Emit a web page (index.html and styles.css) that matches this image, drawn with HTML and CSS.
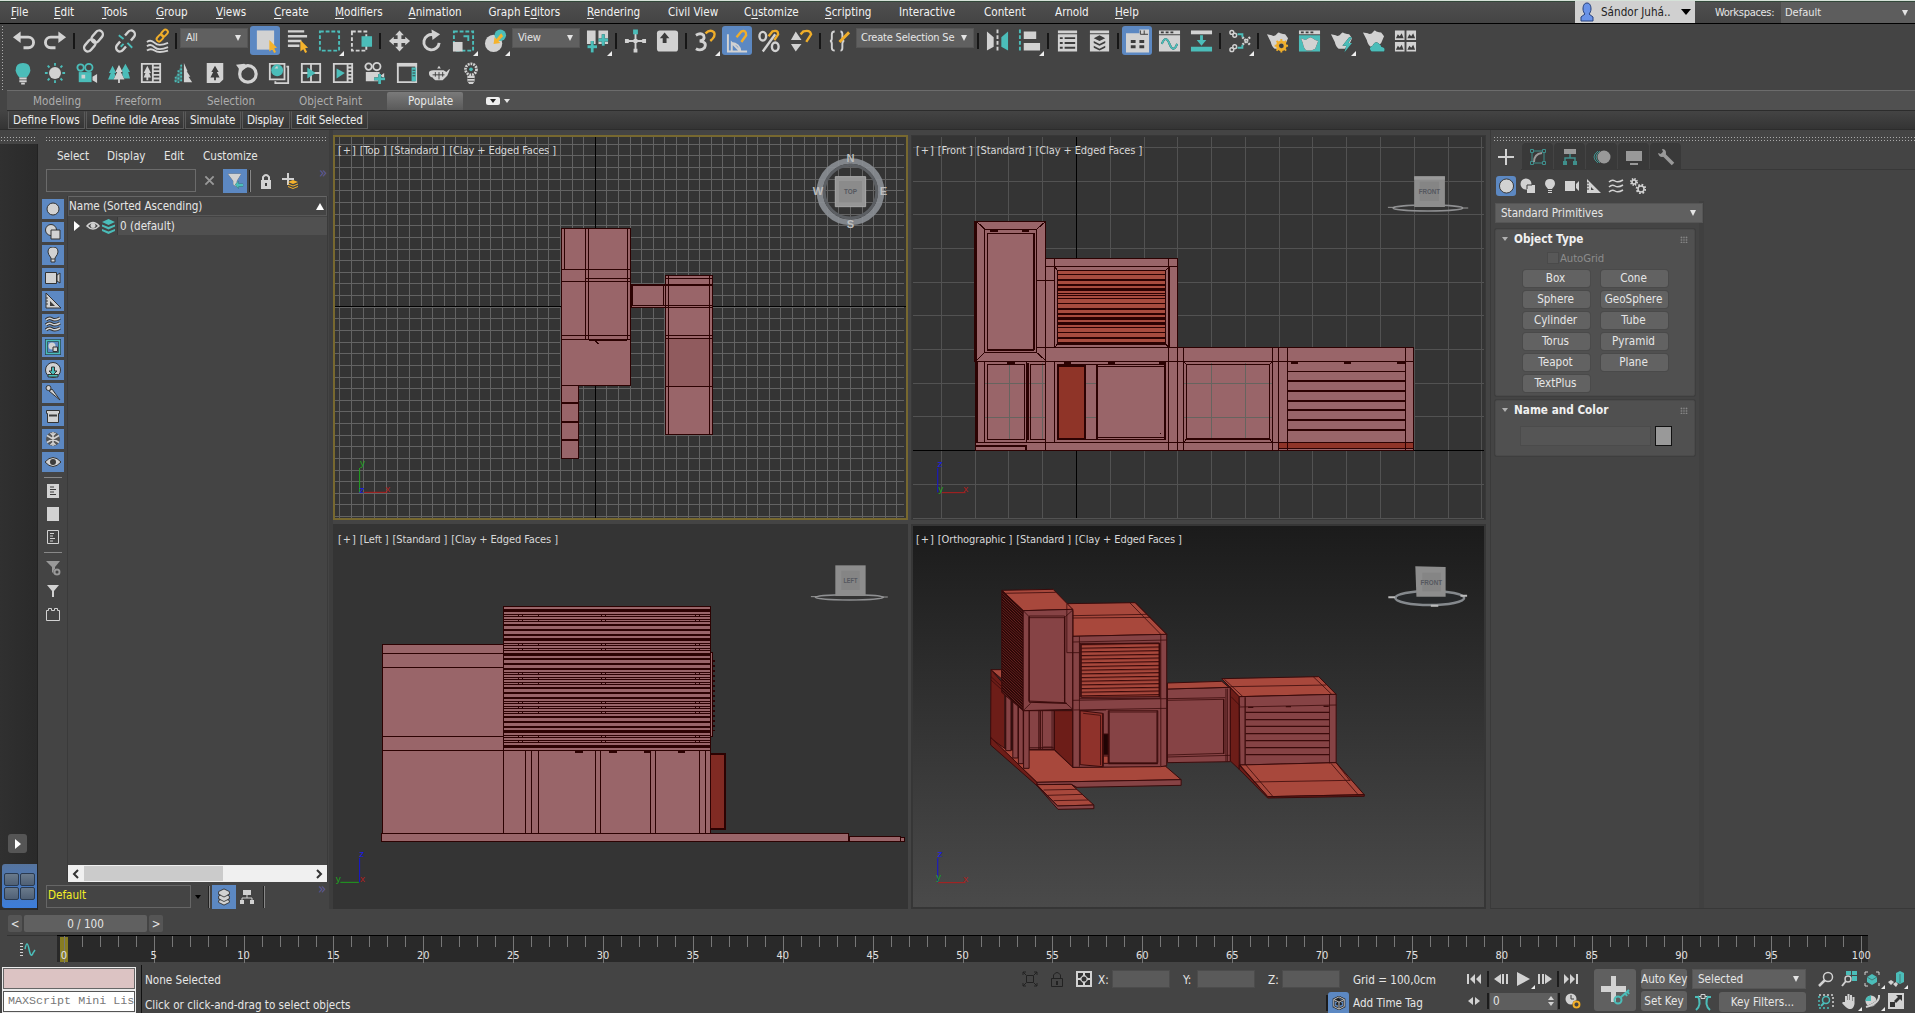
FILE: index.html
```html
<!DOCTYPE html>
<html lang="en">
<head>
<meta charset="utf-8">
<title>3ds Max</title>
<link rel="stylesheet" href="styles.css">
</head>
<body>
<nav class="menubar">
  <div class="menus">
    <span><u>F</u>ile</span><span><u>E</u>dit</span><span><u>T</u>ools</span><span><u>G</u>roup</span><span><u>V</u>iews</span><span><u>C</u>reate</span><span><u>M</u>odifiers</span><span><u>A</u>nimation</span><span>Graph E<u>d</u>itors</span><span><u>R</u>endering</span><span>Civil View</span><span>C<u>u</u>stomize</span><span><u>S</u>cripting</span><span>Interactive</span><span>Content</span><span>Arnold</span><span><u>H</u>elp</span>
  </div>
  <div class="user">
    <svg width="14" height="20" viewBox="0 0 14 20"><path d="M7 1c3 0 4 3 4 6 0 2-1 4-2 5l4 3v4H1v-4l4-3c-1-1-2-3-2-5 0-3 1-6 4-6z" fill="#6a93e8" stroke="#26407c"/></svg>
    <span>Sándor Juhá..</span><i class="down dark"></i>
  </div>
  <span class="wslabel">Workspaces:</span>
  <div class="workspace"><span>Default</span><i class="down small"></i></div>
</nav>

<div class="toolbar main-tools">
  <div class="tool"><svg viewBox="0 0 24 24"><path class="ls w3" d="M6 8h11a5 5 0 0 1 0 11h-5"/><path class="l" d="M1 8l8-6v12z"/></svg></div>
  <div class="tool"><svg viewBox="0 0 24 24"><path class="ls w3" d="M18 8H7a5 5 0 0 0 0 11h5"/><path class="l" d="M23 8l-8-6v12z"/></svg></div>
  <i class="sep"></i>
  <div class="tool"><svg viewBox="0 0 24 24"><g class="ls w25" transform="rotate(-50 12 12)"><rect x="-1" y="8" width="14" height="8" rx="4"/><rect x="11" y="8" width="14" height="8" rx="4"/></g></svg></div>
  <div class="tool"><svg viewBox="0 0 24 24"><g class="ls w25" transform="rotate(-50 12 12)"><path d="M8 8H3a4 4 0 0 0 0 8h5M16 8h5a4 4 0 0 1 0 8h-5"/></g><path class="ts w2" d="M5 6l5 4M14 14l5 5M7 18l3-3"/></svg></div>
  <div class="tool"><svg viewBox="0 0 24 24"><path class="ls w2" d="M1 13q4-3 8 1t14 0M1 17.500q4-3 8 1t14 0M1 22q4-3 8 0t14 0"/><g class="gs w2" transform="rotate(-48 17 7)"><rect x="10" y="4" width="8" height="5" rx="2.500"/><rect x="17" y="4" width="8" height="5" rx="2.500"/></g></svg></div>
  <i class="sep"></i>
  <div class="combo c-all"><span>All</span><i class="down small"></i></div>
  <div class="tool on"><svg viewBox="0 0 24 24"><path class="l" d="M3 1h18v20H3z"/><path class="g" d="M16 11v12l3-2.500 2 4 2-1-2-4 3-.5z"/></svg></div>
  <div class="tool"><svg viewBox="0 0 24 24"><path class="ls w25" d="M2 2h17M2 7h20M2 12h14M2 17h12"/><path class="g" d="M15 11v12l3-2.500 2 4 2-1-2-4 3-.5z"/></svg></div>
  <div class="tool fly"><svg viewBox="0 0 24 24"><path class="ts w2 dash" d="M2 2h20v20H2z"/></svg></div>
  <div class="tool"><svg viewBox="0 0 24 24"><path class="ls w2 dash" d="M2 2h15v20H2z"/><path class="t" d="M12 7h11v11H12z"/></svg></div>
  <i class="sep"></i>
  <div class="tool"><svg viewBox="0 0 24 24"><path class="l" d="M12 1l4.500 5H14v4h4V7.500l5 4.500-5 4.500V14h-4v4h2.500L12 23l-4.500-5H10v-4H6v2.500L1 12l5-4.500V10h4V6H7.500z"/></svg></div>
  <div class="tool"><svg viewBox="0 0 24 24"><path class="ls w3" d="M14 5.500A8 8 0 1 0 20 14"/><path class="l" d="M12 0l9 5-8 6z"/></svg></div>
  <div class="tool fly"><svg viewBox="0 0 24 24"><path class="ts w2 dash" d="M2 2h20v20H2z"/><path class="l" d="M1 13h10v10H1z"/><path class="ts w2" d="M12 7h5v5"/></svg></div>
  <div class="tool fly"><svg viewBox="0 0 24 24"><circle class="l" cx="10" cy="14.500" r="9"/><circle class="t" cx="17" cy="6" r="6"/><path class="g" d="M18 4l2 3-5 5 2 2-7 1 1-7 2 2z"/></svg></div>
  <div class="combo c-view"><span>View</span><i class="down small"></i></div>
  <div class="tool fly"><svg viewBox="0 0 24 24"><path class="l" d="M1 1h9v14H1zM13 1h10v14H13z"/><path class="ts w3 halo" d="M6.500 12v12M1.500 18h10M18 5v12M13 11h10"/></svg></div>
  <i class="sep"></i>
  <div class="tool"><svg viewBox="0 0 24 24"><path class="ls w2" d="M12 4v18M2 12h20"/><path class="l" d="M1 10h4v4H1zM19 10h4v4h-4zM10 20h4v4h-4zM10 10h4v4h-4z"/><path class="t" d="M9.500 0h5v5h-5z"/></svg></div>
  <div class="tool"><svg viewBox="0 0 24 24"><rect class="l" x="1" y="1" width="22" height="22" rx="3"/><path class="k" d="M9 3l5 6h-3v5H7V9H4z"/></svg></div>
  <i class="sep"></i>
  <div class="tool fly"><svg viewBox="0 0 24 24"><path class="ls w3" d="M2 6q5-3 8 0 2 5-4 6 8 1 5 7-4 4-9 1"/><path class="gs w25" d="M12 4q5-5 9-1 2 4-4 9"/></svg></div>
  <div class="tool on"><svg viewBox="0 0 24 24"><path class="ls w2" d="M2 5v18h20M6 23v-9l9 9M6 14a9 9 0 0 1 9 9"/><path class="gs w25" d="M11 8l5-6q5-2 5 4l-5 7"/></svg></div>
  <div class="tool"><svg viewBox="0 0 24 24"><g class="ls w25"><ellipse cx="5" cy="7" rx="3.500" ry="4.500"/><ellipse cx="18" cy="18" rx="3.500" ry="4.500"/><path d="M18 5L5 23"/></g><path class="gs w25" d="M11 7l4-5q6-2 6 3l-4 6"/></svg></div>
  <div class="tool"><svg viewBox="0 0 24 24"><path class="l" d="M6 2l6 9H1zM1 15h11l-6 8z"/><path class="gs w25" d="M11 5l3-3q7-2 8 3l-5 8"/></svg></div>
  <i class="sep"></i>
  <div class="tool"><svg viewBox="0 0 24 24"><path class="ls w2" d="M7 2Q4 2 4 5v4q0 3-2 3 2 0 2 3v4q0 3 3 3M13 2q2 0 2 3v4q0 3 2 3-2 0-2 3v4q0 3-2 3"/><path class="gs w3" d="M22 3L12 13"/></svg></div>
  <div class="combo c-sets"><span>Create Selection Se</span><i class="down small"></i></div>
  <i class="sep"></i>
  <div class="tool"><svg viewBox="0 0 24 24"><path class="l" d="M1 2l7 6v10l-7 4z"/><path class="t" d="M23 2l-7 6v10l7 4z"/><path class="ls w2 dash" d="M12 0v24"/></svg></div>
  <div class="tool fly"><svg viewBox="0 0 24 24"><path class="ts w2 dash" d="M2 0v24"/><path class="l" d="M6 2h13v8H6zM6 14h17v8H6z"/></svg></div>
  <i class="sep"></i>
  <div class="tool"><svg viewBox="0 0 24 24"><path class="l" d="M2 1h20v3H2zM2 5h20v18H2z"/><path class="ks w2" d="M4 9h3M9 9h11M4 14h3M9 14h11M4 19h3M9 19h11"/></svg></div>
  <div class="tool"><svg viewBox="0 0 24 24"><path class="l" d="M2 1h20v3H2zM2 5h20v18H2z"/><path class="k" d="M12 6l6 3-6 3-6-3zM6 12l6 3 6-3v2l-6 3-6-3zM6 17l6 3 6-3v2l-6 3-6-3z"/></svg></div>
  <i class="sep"></i>
  <div class="tool on"><svg viewBox="0 0 24 24"><path class="l" d="M0 4h14V0h10v24H0z"/><path class="ks w3" d="M5 12.500h5M14 12.500h5M5 18h5M14 18h5"/><path class="ks" d="M15 1v4h8M19 1v4"/></svg></div>
  <div class="tool"><svg viewBox="0 0 24 24"><path class="l" d="M1 1h22v4H1zM1 6h22v17H1z"/><path class="ks w2" d="M3 3h3M8 3h3M13 3h3"/><path class="ts w2 halo" d="M4 15q4-10 8 0t8 0"/></svg></div>
  <div class="tool"><svg viewBox="0 0 24 24"><path class="l" d="M1 1h22v4H1z"/><path class="t" d="M1 18h22v5H1zM10.500 6h3v5H17l-5 6-5-6h3.500z"/></svg></div>
  <i class="sep"></i>
  <div class="tool fly"><svg viewBox="0 0 24 24"><g class="ls w15"><circle cx="4" cy="3" r="2"/><circle cx="7" cy="6" r="2"/><circle cx="4" cy="21" r="2"/><circle cx="7" cy="18" r="2"/></g><path d="M15 8l8 8M23 8l-8 8" fill="none" stroke="#d2d2d2" stroke-width="2.500" stroke-dasharray="2 1"/><path class="ts w2" d="M10 5h5v3M10 19h5v-3"/></svg></div>
  <i class="sep"></i>
  <div class="tool"><svg viewBox="0 0 24 24"><path class="l" d="M1 5l5 1q3 2 6-2 1-2 3 0 3 1 5 1l3 4-3 7-4 4H9q-3-2-4-7z"/><path class="gs w2" d="M16 10v3M16 21v3M9 17h3M20 17h3M11 12l2 2M19 20l2 2M21 12l-2 2M11 22l2-2"/><circle class="gs w3" cx="16" cy="17" r="4"/><circle class="k" cx="16" cy="17" r="2.500"/></svg></div>
  <div class="tool"><svg viewBox="0 0 24 24"><path class="l" d="M1 1h22v4H1z"/><path class="ks w2" d="M3 3h3M8 3h3M13 3h3"/><path class="t" d="M1 6h22v17H1z"/><path class="l halo" d="M3 9l5 2q2-2 5-3 3 1 5 3l3 1-3 8-4 2h-5q-3-2-4-8z"/></svg></div>
  <div class="tool fly"><svg viewBox="0 0 24 24"><path class="l" d="M1 5l5 1q3 2 6-2 1-2 3 0 3 1 5 1l3 4-3 7-4 4H9q-3-2-4-7z"/><path class="t halo" d="M20 8l-7 9h4l-2 7 8-10h-4l4-6z"/></svg></div>
  <div class="tool"><svg viewBox="0 0 24 24"><path class="l" d="M1 3l5 1q3 2 6-2 1-2 3 0 3 1 5 1l3 4-3 7-4 4H9q-3-2-4-7z"/><path class="t halo" d="M10 23q-4-4 1-6 3-6 7-2 2 1 2 3 5 1 3 5z"/></svg></div>
  <div class="tool"><svg viewBox="0 0 24 24"><path class="l" d="M1 1h10v10H1zM13 1h10v10H13zM1 13h10v10H1zM13 13h10v10H13z"/><path class="k" d="M2 9l2-4 2 2 2-3 2 5zM14 9l2-4 2 2 2-3 2 5zM2 21l2-4 2 2 2-3 2 5zM14 21l2-4 2 2 2-3 2 5z"/></svg></div>
</div>

<div class="toolbar scene-tools">
  <div class="tool"><svg viewBox="0 0 24 24"><path class="t" d="M12 1q8 0 8 8 0 3-4 8H8Q4 12 4 9q0-8 8-8z"/><path class="ls w2" d="M8 18h8M8 21h8M10 23.500h4"/></svg></div>
  <div class="tool"><svg viewBox="0 0 24 24"><circle class="l" cx="12" cy="12" r="6.500"/><path class="ts w2" d="M12 1v3M12 20v3M1 12h3M20 12h3M4 4l2 2M18 18l2 2M20 4l-2 2M4 20l2-2"/></svg></div>
  <div class="tool"><svg viewBox="0 0 24 24"><g class="ts w2"><circle cx="5" cy="6" r="3.500"/><circle cx="14" cy="6" r="4"/></g><path class="t" d="M3 11h14v11H3z"/><path class="l" d="M18 16l5-3v10l-5-3zM6 14h4v4H6z"/></svg></div>
  <div class="tool"><svg viewBox="0 0 24 24"><path class="t" d="M5 4l4 8H7l3 7H0l3-7H1zM19 2l5 9h-2l2 7h-9l1-7h-2z"/><path class="l halo" d="M12 3l4 8h-2l4 8h-5v4h-2v-4H6l4-8H8z"/></svg></div>
  <div class="tool"><svg viewBox="0 0 24 24"><path class="ls w2" d="M2 2h20v20H2zM15 6h6M15 10h6M15 14h6M15 18h6M14 2v20"/><path class="l" d="M8 4l4 8h-2l2 5H9v3H7v-3H4l2-5H4z"/></svg></div>
  <div class="tool"><svg viewBox="0 0 24 24"><path class="t" d="M11 1v20H2z" opacity=".4"/><path class="ts w2" stroke-dasharray="2 2" d="M10 3v20M7 9v14M4 16v6"/><path class="l" d="M13 1l4 9h-1l4 6h-2l4 6h-9z"/></svg></div>
  <div class="tool"><svg viewBox="0 0 24 24"><path class="l" d="M3 1h18v18l-4 4H3z"/><path class="k" d="M12 4l4 7h-2l3 6h-4v3h-2v-3H7l3-6H8z"/></svg></div>
  <div class="tool"><svg viewBox="0 0 24 24"><circle class="ls" stroke-width="3.500" cx="13" cy="13" r="9" style="stroke-width:3.500"/><path class="l" d="M0 3l9-1 4 3-7 5-3 2V7z"/></svg></div>
  <div class="tool"><svg viewBox="0 0 24 24"><path class="ls w2" d="M20 5h2v18H8v-2M18 2v17H2V2z"/><circle class="t" cx="10" cy="9" r="6.500"/><path class="l" d="M7 7l3-3 1 3z"/></svg></div>
  <div class="tool"><svg viewBox="0 0 24 24"><path class="ls w2" d="M2 2h20v20H2zM12 2v20M2 12h20"/><path class="t" d="M8 6l9 6-9 6z"/></svg></div>
  <div class="tool"><svg viewBox="0 0 24 24"><path class="ls w2" d="M2 2h20v20H2zM17 2v20M18 6h4M18 10h4M18 14h4M18 18h4"/><path class="t" d="M5 7l9 5-9 6z"/></svg></div>
  <div class="tool"><svg viewBox="0 0 24 24"><g class="ls w2"><circle cx="5" cy="5" r="3.500"/><circle cx="14" cy="5" r="4"/></g><path class="l" d="M2 11h15v10H2zM18 15l4-3v6z"/><path class="ts w3 halo" d="M17 13v11M11 18.500h12"/></svg></div>
  <div class="tool"><svg viewBox="0 0 24 24"><path class="ls w2" d="M2 2h20v20H2z"/><path class="l" d="M1 1h22v4H1z"/><path class="t" d="M17 6h5v15h-5z"/><path class="ks" d="M18 9h3M18 12h3M18 15h3"/></svg></div>
  <div class="tool"><svg viewBox="0 0 24 24"><path class="l" d="M6 9h11l3 2 3-3h1l-3 7-5 5H8q-2-1-3-3-4-1-4-5 0-3 5-3zM10 7l2-3 2 3z"/><path class="ks" d="M8 11v5M12 11v8M16 11v5M5 14h13"/></svg></div>
  <div class="tool"><svg viewBox="0 0 24 24"><circle class="ls w3" stroke-dasharray="2 1" cx="12" cy="8" r="6"/><circle class="t" cx="12" cy="8" r="2"/><path class="l" d="M8 15h8v6l-2 3h-4l-2-3z"/><path class="ks" d="M8 18h8M8 21h8"/></svg></div>
</div>

<div class="ribbon-tabs"><span>Modeling</span><span>Freeform</span><span>Selection</span><span>Object Paint</span><span class="active">Populate</span><b class="pill"><i class="down tiny dark"></i></b><i class="down tiny"></i></div>
<div class="ribbon-panel"><span>Define Flows</span><span>Define Idle Areas</span><span>Simulate</span><span>Display</span><span>Edit Selected</span></div>

<main class="workspace-area">
  <aside class="dockcol">
    <div class="dots"></div>
    <div class="dock">
      <button class="dockplay"><i class="right"></i></button>
      <div class="layout-tile"><i></i><i></i><i></i><i></i></div>
    </div>
  </aside>

  <section class="explorer">
    <div class="dots"></div>
    <div class="ex-menu"><span>Select</span><span>Display</span><span>Edit</span><span>Customize</span></div>
    <div class="ex-search">
      <div class="box"></div>
      <svg class="x" viewBox="0 0 12 12"><path d="M1.500 1.500l9 9M10.500 1.500l-9 9" stroke="#999" stroke-width="2"/></svg>
      <div class="blue"><svg viewBox="0 0 20 20"><path class="l halo" d="M2 2h15l-5 8v7l-4-3v-4z"/><path class="t halo" d="M10 14l4-4v3h5v3h-5v3z"/></svg></div>
      <i class="vsep"></i>
      <svg class="i16 lock" viewBox="0 0 16 16"><path class="ls w2" d="M5 8V4q3-4 6 0v4"/><path class="l" d="M3 7h10v9H3z"/><path class="ks w2" d="M8 10v3"/></svg>
      <svg class="i16" viewBox="0 0 16 16"><path class="ls w2" d="M6 0v12M0 6h12"/><path class="g" d="M11 7l5 2-5 2-5-2zM6 10.500l5 2 5-2v1l-5 2-5-2zM6 13l5 2 5-2v1l-5 2-5-2z"/></svg>
      <span class="more">»</span>
    </div>
    <div class="ex-body">
      <div class="filters">
        <div class="f"><svg viewBox="0 0 16 16"><circle class="l o" cx="8" cy="8" r="6"/></svg></div>
        <div class="f"><svg viewBox="0 0 16 16"><circle class="l o" cx="6" cy="6" r="5.500"/><path class="l o" d="M6 6h9v9H6z"/></svg></div>
        <div class="f"><svg viewBox="0 0 16 16"><path class="l o" d="M8 0q5 0 5 5 0 2-3 6v4H6v-4Q3 7 3 5q0-5 5-5z"/><path class="ks" d="M6 12h4"/></svg></div>
        <div class="f"><svg viewBox="0 0 16 16"><path class="l o" d="M.5 2.500h11v11H.5zM12 5l3-2v10l-3-2z"/></svg></div>
        <div class="f"><svg viewBox="0 0 16 16"><path class="l o" d="M1 0l15 15H1z"/><path class="k" d="M5 8l5 5H5z"/><path class="ks" d="M1 5h2M1 8h2M1 11h2"/></svg></div>
        <div class="f"><svg viewBox="0 0 16 16"><path d="M1 4q3-3 6-1t8-1M1 9q3-3 6-1t8-1M1 14q3-3 6-1t8-1" fill="none" stroke="#333" stroke-width="3.500"/><path class="ls w15" d="M1 4q3-3 6-1t8-1M1 9q3-3 6-1t8-1M1 14q3-3 6-1t8-1"/></svg></div>
        <div class="f"><svg viewBox="0 0 16 16"><path fill="#2c4350" d="M0 0h16v16H0z"/><path class="ts w15" d="M1.500 1.500h13v13h-13z"/><path fill="#5c88c2" d="M3 3h10v10H3z"/><circle class="l" cx="7" cy="7" r="3.500"/><path class="l o" d="M8 8h4.500v4.500H8z"/></svg></div>
        <div class="f"><svg viewBox="0 0 16 16"><circle class="l o" cx="8" cy="8" r="7.500"/><path class="t o" d="M6.500 5h3v4H12l-4 4-4-4h2.500zM3 12.500h10V15H3z"/></svg></div>
        <div class="f"><svg viewBox="0 0 16 16"><path class="l o" d="M4 6l3-2 8 11z"/><circle class="l o" cx="3.500" cy="3" r="2.500"/></svg></div>
        <div class="f"><svg viewBox="0 0 16 16"><path class="l o" d="M1.500 2.500h13v3h-1v9h-11v-9h-1z"/><path class="ks w2" d="M4 7.500h8"/></svg></div>
        <div class="f"><svg viewBox="0 0 16 16"><circle cx="8" cy="8" r="7" fill="#555"/><path class="ls w15" d="M8 1v14M2 4.500l12 7M14 4.500L2 11.500M5.500 2l2.500 2.500L10.500 2M5.500 14L8 11.500l2.500 2.500"/></svg></div>
        <div class="f"><svg viewBox="0 0 16 16"><path class="l o" d="M0 8q8-9 16 0-8 9-16 0z"/><circle class="k" cx="8" cy="8" r="3"/></svg></div>
        <hr>
        <div class="p"><svg viewBox="0 0 16 16"><path class="l" d="M2 1h12v14H2z"/><path class="ks" d="M5 4h4M5 6.500h6M5 9h4M5 11.500h6"/></svg></div>
        <div class="p"><svg viewBox="0 0 16 16"><path class="l" d="M2 1h12v14H2z"/></svg></div>
        <div class="p"><svg viewBox="0 0 16 16"><path class="ls" d="M2.500 1.500h11v13h-11zM5 4.500h4M5 7h3M5 9.500h5M5 12h3"/></svg></div>
        <hr class="second">
        <div class="p"><svg viewBox="0 0 16 16" opacity=".6"><path class="l" d="M1 1h14l-5 6v8l-3-3V7z"/><circle class="ls w2 halo" cx="12" cy="12" r="2.500"/></svg></div>
        <div class="p"><svg viewBox="0 0 16 16"><path class="l" d="M2 2h12L9 8v6H7V8z"/></svg></div>
        <div class="p"><svg viewBox="0 0 16 16"><path class="ls" d="M1.500 4.500h2v-2h3v2h3v-2h3v2h2v10h-13z"/></svg></div>
      </div>
      <div class="tree">
        <div class="th"><span>Name (Sorted Ascending)</span><i class="up"></i></div>
        <div class="tr"><i class="right"></i>
          <svg width="14" height="10" viewBox="0 0 14 10"><path class="ls w15" d="M1 5q6-7 12 0-6 6-12 0z"/><circle class="l" cx="7" cy="4.500" r="2.500"/></svg>
          <svg width="13" height="15" viewBox="0 0 13 15"><path class="t" d="M6.500 0L13 3 6.500 6 0 3zM0 5.500l6.500 2.500L13 5.500V7.500L6.500 10.500 0 7.500zM0 10l6.500 2.500L13 10v2l-6.500 3L0 12z"/></svg>
          <span>0 (default)</span></div>
        <div class="hscroll"><svg viewBox="0 0 8 10"><path d="M6 1L2 5l4 4"/></svg><i></i><svg viewBox="0 0 8 10"><path d="M2 1l4 4-4 4"/></svg></div>
      </div>
    </div>
    <div class="ex-foot">
      <div class="box">Default</div><i class="down tiny black"></i><i class="vsep"></i>
      <div class="blue"><svg viewBox="0 0 20 20"><path class="l o" d="M10 1l6 3v3l-2 1 2 1v3l-2 1 2 1v2l-6 3-6-3v-2l2-1-2-1V9l2-1-2-1V4z"/><path class="ks" d="M4 7l6 3 6-3M4 12l6 3 6-3"/></svg></div>
      <svg class="i16" viewBox="0 0 16 16"><path class="l" d="M4 1h8v5H4zM1 11h4v4H1zM11 11h4v4h-4z"/><path class="ls" d="M8 6v3M3 11V9h10v2"/></svg>
      <i class="vsep"></i><span class="more">»</span>
    </div>
  </section>

  <section class="viewports">
    <div class="vp active">
      <svg viewBox="8.100 15 1554.400 1155" preserveAspectRatio="none">
        <g class="grid" data-x0="27" data-dx="31.360" data-y0="43" data-dy="34.900"></g>
        <path class="axis" d="M717 15V1170M8 529H1560"/>
        <g class="pk">
          <path d="M625 295H813V767H625zM625 767H672V985H625zM814 465H907V532H814zM907 437H1034V913H907z"/>
          <path fill="#905b5e" d="M907 626H1034V769H907z"/>
        </g>
        <path class="e" d="M634 295V418M690 295V628M698 295V628M804 295V628M625 418H813M690 445H813M625 454H813M625 617H813M625 628H813M625 418V626M817 468V527M901 468V527M814 527H1034M907 446H1034M907 532H1034M915 437V913M1026 437V913M907 617H1034M907 626H1034M716 630l10 13"/>
        <path class="e2" d="M814 465H1034M700 631H803M625 820H672M625 875H672M625 929H672"/>
        <ellipse cx="1407" cy="185" rx="83" ry="92" fill="none" stroke="#8b8f95" stroke-width="17" vector-effect="none" opacity=".9"/>
        <ellipse cx="1407" cy="185" rx="71" ry="79" fill="none" stroke="#5c5f63" stroke-width="3"/>
        <path fill="#969696" stroke="#aaa" d="M1366 140h82v90h-82z"/><path fill="#8b8b8b" d="M1376 153h62v64h-62z"/>
        <g class="cubetext"><text x="1407" y="193" class="dim" textLength="35" lengthAdjust="spacingAndGlyphs">TOP</text></g>
        <g class="nsew"><text x="1407" y="97">N</text><text x="1407" y="293">S</text><text x="1319" y="195">W</text><text x="1496" y="195">E</text></g>
        <path stroke="#1fa01f" d="M80 1014V1087"/><path stroke="#b01e1e" d="M92 1087H155"/>
        <g class="axl"><text x="88" y="1008" fill="#1fa01f">y</text><text x="86" y="1088" fill="#1a1aea">z</text><text x="156" y="1086" fill="#b01e1e">x</text></g>
      </svg>
      <p class="vl"><span>[+]</span><span>[Top ]</span><span>[Standard ]</span><span>[Clay + Edged Faces ]</span></p>
    </div>
    <div class="vp front">
      <svg viewBox="2.700 15 1554.400 1155" preserveAspectRatio="none">
        <g class="grid" data-x0="85" data-dx="91.300" data-y0="52" data-dy="101.100"></g>
        <path class="axis" d="M450 20V1165M8 961H1552"/>
        <g class="pk">
          <path d="M175 274H367V385H723V653H1362V961H178V695H175z"/>
          <path fill="#a84c3f" d="M398 421H691V640H398z"/>
          <path fill="#8f3428" d="M400 708H473V925H400zM997 936H1361V955H997z"/>
        </g>
        <path class="gl" d="M269 700V930M202 760H366M202 862H366M359 700V930M475 760H503M475 862H503M815 700V925M907 700V925M742 760H980M742 862H980"/>
        <path class="e" d="M202 298H342V667H202zM209 310H336V659H209zM180 274L202 298M367 274L342 298M367 692L342 667M180 692L202 667M342 451H390M390 385V653M366 385V961M367 409H723M342 653H1362M178 695H1362M698 385V961M723 653V961M740 653V961M980 653V961M997 653V961M1020 653V961M1340 653V961M178 937H997M997 955H1362M390 409H701V653H390zM398 421H691V643H398zM390 411l8 8M701 411l-10 10M390 653l8-10M701 653l-10-10"/>
        <path class="e" d="M202 695V937M209 703H310V928H209zM316 695V937M326 703H366M326 703V928H366M390 695V937M475 704V928M503 704V928M398 704H693M398 928H693M508 708H689V922H508zM740 695V937M747 703H973V927H747zM978 697l-6 6M742 697l5 6M978 935l-6-8M742 935l5-8M1020 724H1340M677 910v2"/>
        <path class="e2" d="M178 274V695M181 695V937M398 450H691M398 465H691M398 537H691M398 551H691M398 624H691M336 310V659M209 659H336M318 700V930M400 706H473V926H400zM506 706V926M690 706V926M747 926H973M178 947H314V960M1020 752H1340M1020 782H1340M1020 812H1340M1020 841H1340M1020 870H1340M1020 900H1340"/>
        <path class="e3" d="M398 479H691M398 566H691M398 580H691"/>
        <path class="e" d="M398 433H691M398 490H691M398 497H691M398 505H691M398 520H691M398 592H691M398 607H691M398 638H691"/>
        <path class="e3" d="M217 302h20M303 302h18M262 698h22M417 697h18M535 699h18M674 698h18M1030 698h20M1173 698h20M1317 698h20"/>
        <ellipse cx="1400" cy="234" rx="94" ry="9" fill="none" stroke="#8f9092" stroke-width="1.500"/>
        <path stroke="#999" d="M1292 232h20M1490 234h19"/>
        <path fill="#8d8d8d" d="M1363 139h83v92h-83z"/><path fill="#9a9a9a" d="M1363 139h83v10h-83z"/><path fill="#858585" d="M1378 155h52v58h-52z"/>
        <g class="cubetext"><text x="1404" y="192" textLength="58" lengthAdjust="spacingAndGlyphs">FRONT</text></g>
        <path stroke="#1515d0" d="M75 1014V1087"/><path stroke="#b01e1e" d="M86 1088H150"/>
        <g class="axl"><text x="81" y="1010" fill="#1a1aea">z</text><text x="83" y="1087" fill="#1fa01f">y</text><text x="151" y="1086" fill="#b01e1e">x</text></g>
      </svg>
      <p class="vl"><span>[+]</span><span>[Front ]</span><span>[Standard ]</span><span>[Clay + Edged Faces ]</span></p>
    </div>
    <div class="vp">
      <svg viewBox="8.100 12 1554.400 1155" preserveAspectRatio="none">
        <g class="pk"><path d="M142 373H469V259H1029V940H1402V965H139V940H142zM1404 949H1543V964H1404zM1543 953h10v10h-10zM1029 398H1034V649H1029z"/><path fill="#802a23" d="M1029 701H1068V928H1029z"/></g>
        <path class="e" d="M469 259V940M142 400H469M142 442H469M142 649H469M142 691H1029M139 940H1402M528 691V940M544 691V940M563 691V940M717 691V940M731 691V940M866 691V940M880 691V940M999 691V940M1015 691V940M1029 691V940"/>
        <path class="e" d="M469 283H1029M469 290H1029M469 298H1029M469 305H1029M469 370H1029M469 377H1029M469 384H1029M469 391H1029M469 458H1029M469 464H1029M469 472H1029M469 479H1029M469 487H1029M469 493H1029M469 545H1029M469 551H1029M469 559H1029M469 566H1029M469 574H1029M469 580H1029M469 646H1029M469 653H1029M469 661H1029M469 668H1029"/>
        <path class="e2" d="M469 315H1029M469 330H1029M469 345H1029M469 417H1029M469 432H1029M469 447H1029M469 504H1029M469 519H1029M469 534H1029M469 591H1029M469 606H1029M469 621H1029"/>
        <path class="e3" d="M469 271H1029M469 358H1029M469 404H1029M469 634H1029M469 680H1029M662 694h22M754 694h22M849 694h18M941 694h20M1029 702h41M1029 927h41"/>
        <path id="studs" class="e" d="M509 283v7M520 283v7M563 283v7M734 283v7M745 283v7M988 283v7M999 283v7M509 298v7M520 298v7M563 298v7M734 298v7M745 298v7M988 298v7M999 298v7"/>
        <use href="#studs" y="87"/><use href="#studs" y="174"/><use href="#studs" y="189"/><use href="#studs" y="262"/><use href="#studs" y="276"/><use href="#studs" y="363"/>
        <path class="e2" d="M1037 420V632" stroke-dasharray="1.500 3.500"/><path class="e2" d="M1067 702V928"/>
        <ellipse cx="1404" cy="232" rx="92" ry="8" fill="none" stroke="#8f9092" stroke-width="1.500"/>
        <path stroke="#999" d="M1300 230h20M1490 231h18"/>
        <path fill="#8d8d8d" d="M1366 136h82v92h-82z"/><path fill="#858585" d="M1382 152h50v58h-50z"/>
        <g class="cubetext"><text x="1407" y="190" textLength="38" lengthAdjust="spacingAndGlyphs">LEFT</text></g>
        <path stroke="#1515d0" d="M80 1014V1087"/><path stroke="#1fa01f" d="M28 1087H78"/>
        <g class="axl"><text x="86" y="1012" fill="#1a1aea">z</text><text x="22" y="1086" fill="#1fa01f">y</text><text x="88" y="1086" fill="#b01e1e">x</text></g>
      </svg>
      <p class="vl"><span>[+]</span><span>[Left ]</span><span>[Standard ]</span><span>[Clay + Edged Faces ]</span></p>
    </div>
    <div class="vp persp">
      <svg viewBox="2.700 12 1554.400 1155" preserveAspectRatio="none">
        <defs>
          <pattern id="slats" width="80" height="8" patternUnits="userSpaceOnUse" patternTransform="translate(248 211) skewY(46)"><path fill="#6a2622" d="M0 0h80v8H0z"/><path fill="#2a0606" d="M0 0h80v5H0z"/></pattern>
          <pattern id="louvre" width="230" height="11" patternUnits="userSpaceOnUse" patternTransform="translate(463 372) skewY(-1)"><path fill="#a8483c" d="M0 0h230v11H0z"/><path fill="#3a0a0a" d="M0 0h230v3H0z"/><path fill="#7e2d26" d="M0 3h230v2H0z"/></pattern>
        </defs>
        <g class="ed">
          <path fill="#6d1d18" d="M219 449L259 500V690L218 655z"/>
          <path fill="#a8483c" d="M219 449h29v28l-29-28z"/>
          <path fill="#2b1414" stroke="none" d="M255 520L306 572V742L255 690z"/>
          <path fill="#864345" d="M322 572H390V688H322z"/>
          <path fill="#6d1d18" d="M390 572H440V742L390 688z"/>
          <path fill="#a8483c" d="M218 655L262 690H390L440 742L690 738L733 779L343 787z"/>
          <path fill="#864345" d="M259 525L273 538V692H259zM278 542L292 556V714H278zM293 558L306 570V731H293zM307 572H322V745H307z"/>
          <path fill="#864345" d="M343 787L733 779V796L449 802L436 793L343 794z"/>
          <path fill="#6d1d18" d="M218 652L343 787L343 797L218 675z"/>
          <path fill="#a8483c" d="M343 794L436 793L497 855L399 858z"/>
          <path fill="#864345" d="M399 858L497 855V866L400 868L343 797z"/>
          <path fill="#a8483c" d="M424 251L609 248L694 343L440 349V272z"/>
          <path fill="#864345" d="M424 272H440V349L694 343V737L678 740L440 742V572L424 560z"/>
          <path fill="#864345" d="M696 507L866 502V725L696 728z"/>
          <path fill="#a8483c" d="M696 489L843 484L862 502L696 507z"/>
          <path fill="#6d1d18" d="M866 503L890 530V748L866 723z"/>
          <path fill="#a8483c" d="M843 476L1105 470L1152 523L890 530z"/>
          <path fill="#864345" d="M890 530L1152 523V728L892 735z"/>
          <path fill="#a8483c" d="M892 735L1152 728L1228 824L967 830z"/>
          <path fill="#6d1d18" d="M967 830L1228 824V829L967 834L890 748V735z"/>
          <path fill="#a8483c" d="M249 211L387 208L440 268L306 272z"/>
          <path fill="url(#slats)" d="M248 211L306 272V572L248 517z"/>
          <path fill="#864345" d="M306 272L440 268V568L306 572z"/>
          <path fill="url(#louvre)" d="M463 372L674 369V530L463 532z"/>
          <path fill="#8f322b" d="M460 572L521 580V740L460 734z"/>
          <path fill="#a8483c" d="M522 708h14v22h-14z"/><path fill="#200404" d="M522 642h14v62h-14z"/>
        </g>
        <path class="e" d="M322 288H418V548L322 543zM322 293H418M306 272l16 18M440 270l-20 20M306 572l20-22M440 568l-20-20M424 251V398M424 398H458M440 349V742M458 349V740M440 366L694 360M678 345V738M250 220L394 217M440 287L640 283M440 294L650 292M594 248L678 343M609 248L694 343M458 370H676V535L458 536M440 541L694 536M440 570L694 565M458 572L530 570M468 580L515 586V735M536 572H670V728H536zM540 576H666M696 536L852 533M696 541L848 538V700L696 705M696 711L866 706M854 506V724M858 506V724M219 470L248 500M219 480L250 511M348 572V687M358 572V687M384 572V687M322 683H388M360 681H385M390 572V688M906 530V735M1134 524V730M890 561L1152 555M868 530l24 27M850 478L900 530M1090 470L1140 523M866 500L1125 495M906 533l0 200M908 735L983 832M1138 730L1213 826M1152 728L1190 783M928 786L1190 781M361 810L451 808M372 826L466 823M388 842L481 840M436 793l15 9"/>
        <path class="e2" d="M322 290V545M418 290V548M322 546L424 550M460 370V532M674 370V530M538 572V730M668 572V728M536 731H670M522 580V740M848 538V702M352 572V687M907 577H1134M907 599H1134M907 619H1134M907 641H1134M907 662H1134M907 683H1134M907 704H1134M914 562h14M1016 560h14M1118 559h14"/>
        <ellipse cx="1405" cy="234" rx="93" ry="21" fill="#26282a" stroke="#85898d" stroke-width="2.500"/>
        <path stroke="#bbb" stroke-width="2" d="M1293 232h18M1488 227h18M1408 257h20"/>
        <path fill="#8d8d8d" d="M1366 139L1448 141V230H1369z"/><path fill="#858585" d="M1385 158h50v56h-50z"/>
        <g class="cubetext"><text x="1409" y="195" textLength="58" lengthAdjust="spacingAndGlyphs">FRONT</text></g>
        <path stroke="#1515d0" d="M75 1014V1087"/><path stroke="#b01e1e" d="M76 1088H150"/>
        <g class="axl"><text x="81" y="1012" fill="#1a1aea">z</text><text x="77" y="1079" fill="#1fa01f">y</text><text x="151" y="1086" fill="#b01e1e">x</text></g>
      </svg>
      <p class="vl"><span>[+]</span><span>[Orthographic ]</span><span>[Standard ]</span><span>[Clay + Edged Faces ]</span></p>
    </div>
  </section>

  <section class="panel">
    <div class="dots"></div>
    <div class="ptabs">
      <div class="pt act"><svg viewBox="0 0 18 18"><path class="ls w2" d="M9 1v16M1 9h16"/></svg></div>
      <div class="pt"><svg viewBox="0 0 18 18"><path stroke="#3f8f8c" fill="none" d="M3 4v10M15 4v10M4 3h10M4 15h10M1.500 1.500h3v3h-3zM13.500 1.500h3v3h-3zM1.500 13.500h3v3h-3zM13.500 13.500h3v3h-3z"/><path d="M5 14q0-8 8-9" stroke="#999" stroke-width="2" fill="none"/></svg></div>
      <div class="pt"><svg viewBox="0 0 18 18"><path fill="#999" d="M3 1h12v5H3z"/><path fill="none" stroke="#3f8f8c" stroke-width="1.500" d="M9 6v4M4 14v-4h10v4"/><path fill="#3f8f8c" d="M2 13h4v4H2zM12 13h4v4h-4z"/></svg></div>
      <div class="pt"><svg viewBox="0 0 18 18"><path fill="none" stroke="#3f8f8c" d="M5 3Q-3 9 5 15M7 3q-8 6 0 12"/><circle cx="11" cy="9" r="6.500" fill="#999"/></svg></div>
      <div class="pt"><svg viewBox="0 0 18 18"><path fill="#999" d="M1 3h16v10H1zM5 15h8v2H5z"/></svg></div>
      <div class="pt"><svg viewBox="0 0 18 18"><path d="M5 5l11 11" stroke="#999" stroke-width="3.500"/><path d="M5 1q4 0 4 4t-4 4q-3 0-4-4l3 1 2-2z" fill="#999"/></svg></div>
    </div>
    <div class="cats">
      <div class="blue"><svg viewBox="0 0 16 16"><circle class="l o" cx="8" cy="8" r="7.500"/></svg></div>
      <svg viewBox="0 0 16 16"><circle class="l" cx="6" cy="6" r="5.500"/><path class="l" d="M7 7h8v8H7z"/><path class="ks" d="M7 11V7h5"/></svg>
      <svg viewBox="0 0 16 16"><path class="l" d="M8 1q5 0 5 5 0 2-3 5H6Q3 8 3 6q0-5 5-5zM6 12h4v1H6zM6 14h4v1H6z"/></svg>
      <svg viewBox="0 0 16 16"><path class="l" d="M1 3h10v10H1zM12 6l3-3v10l-3-3z"/></svg>
      <svg viewBox="0 0 16 16"><path class="l" fill-rule="evenodd" d="M1 1l14 14H1zM5 9v3h3z"/><path class="ks" d="M1 5h2M1 8h2M1 11h2"/></svg>
      <svg viewBox="0 0 16 16"><path class="ls w15" d="M1 4q3-3 6-1t8-1M1 9q3-3 6-1t8-1M1 14q3-3 6-1t8-1"/></svg>
      <svg viewBox="0 0 16 16"><g class="ls w15"><circle cx="4" cy="4" r="2"/><circle cx="11" cy="11" r="3"/></g><g class="ls w2"><circle cx="4" cy="4" r="3" stroke-dasharray="1.300 1.056"/><circle cx="11" cy="11" r="4.300" stroke-dasharray="1.700 1.677"/></g></svg>
    </div>
    <div class="pscroll">
      <div class="combo c-prim"><span>Standard Primitives</span><i class="down small"></i></div>
      <div class="rollout r1">
        <h3><i class="down tiny grey"></i><span>Object Type</span><b class="grip"></b></h3>
        <label><i></i>AutoGrid</label>
        <div class="prims"><button>Box</button><button>Cone</button><button>Sphere</button><button>GeoSphere</button><button>Cylinder</button><button>Tube</button><button>Torus</button><button>Pyramid</button><button>Teapot</button><button>Plane</button><button>TextPlus</button></div>
      </div>
      <div class="rollout r2">
        <h3><i class="down tiny grey"></i><span>Name and Color</span><b class="grip"></b></h3>
        <div class="namerow"><div class="field"></div><div class="swatch"></div></div>
      </div>
    </div>
  </section>
</main>

<div class="slider"><button>&lt;</button><button class="thumb">0 / 100</button><button>&gt;</button></div>
<div class="timeline">
  <div class="curve"><svg width="16" height="14" viewBox="0 0 16 14"><path class="ls" d="M0 1.500h3M0 4.500h3M0 7.500h3M0 10.500h3M0 13.500h3"/><path class="ts w15" d="M5 7q2-10 4 0t4 4l2-3"/></svg></div>
  <svg class="track" width="1811" height="27"><rect x="3" y="1" width="8" height="25" fill="#867c22"/><g id="ticks"></g></svg>
</div>

<footer class="status">
  <div class="listener"><div class="pink"></div><div class="white">MAXScript Mini Lis</div></div>
  <div class="prompt"><span>None Selected</span><span>Click or click-and-drag to select objects</span></div>
  <div class="coords">
    <div class="row">
      <svg viewBox="0 0 16 16" class="cic"><path d="M1 4V1h3M12 1h3v3M15 12v3h-3M4 15H1v-3M4.500 4.500h7v7h-7zM1 1l3 3M15 1l-3 3M1 15l3-3M15 15l-3-3" fill="none" stroke="#222"/></svg>
      <svg viewBox="0 0 16 16" class="cic"><path fill="none" stroke="#222" d="M4.500 7V4q3.500-5 7 0v3M2.500 7.500h11v8h-11z"/><path fill="#222" d="M7 10h2v4H7z"/></svg>
      <svg viewBox="0 0 16 16" class="cic"><path class="l" d="M0 0h16v16H0z"/><path fill="#333" d="M2 2h5v2L4 7H2zM9 2h5v5h-2L9 4zM2 9h2l3 3v2H2zM12 9h2v5H9v-2z"/><circle cx="8" cy="8" r="2.500" fill="#333"/></svg>
      <label>X:</label><i class="num"></i><label>Y:</label><i class="num"></i><label>Z:</label><i class="num"></i><span class="gridtxt">Grid = 100,0cm</span>
    </div>
    <div class="row tag"><i class="bsep"></i><div class="blue"><svg viewBox="0 0 16 16"><path d="M8 1l6 3v8l-6 3-6-3V4zM2 4l6 3 6-3M8 7v8M5 3l6 3M5 10l3-3 3 3" fill="none" stroke="#222" stroke-width="2.500"/><path class="ls" d="M8 1l6 3v8l-6 3-6-3V4zM2 4l6 3 6-3M8 7v8"/></svg></div><span>Add Time Tag</span></div>
  </div>
  <div class="transport">
    <div class="row first">
      <svg viewBox="0 0 16 12"><path class="l" d="M1 1h2v10H1zM9 1v10L4 6zM15 1v10l-5-5z"/></svg><i class="bsep"></i>
      <svg viewBox="0 0 16 12"><path class="l" d="M8 1v10L1 6zM9 1h2v10H9zM13 1h2v10h-2z"/></svg>
      <div class="play fly3"><svg viewBox="0 0 16 16"><path class="l" d="M2 1l13 7-13 7z"/></svg></div>
      <svg viewBox="0 0 16 12"><path class="l" d="M8 1v10l7-5zM1 1h2v10H1zM5 1h2v10H5z"/></svg><i class="bsep"></i>
      <svg viewBox="0 0 16 12"><path class="l" d="M1 1v10l5-5zM7 1v10l5-5zM13 1h2v10h-2z"/></svg>
    </div>
    <div class="row">
      <svg viewBox="0 0 16 12"><path class="l" d="M7 2v8L2 6zM9 2v8l5-4z"/></svg><i class="bsep"></i>
      <div class="spin"><span>0</span><svg viewBox="0 0 6 10"><path class="l" d="M3 0l3 4H0zM0 6h6l-3 4z"/></svg></div><i class="bsep"></i>
      <svg viewBox="0 0 16 16" class="clock"><circle class="l" cx="6" cy="6" r="5.500"/><path class="ks" d="M6 2v4h3"/><circle class="gs w2 halo" cx="11.500" cy="11.500" r="3"/></svg>
    </div>
  </div>
  <button class="bigkey"><svg viewBox="0 0 30 30"><path class="l halo" d="M11 1h5v10h10v6H16v10h-5V17H1v-6h10z"/><g class="ts w2"><circle cx="18" cy="25" r="3.500"/><path d="M20 23l9-8M25 18l2 3M27 16l2 3"/></g></svg></button>
  <div class="keys"><button>Auto Key</button><button>Set Key</button></div>
  <div class="keysets">
    <div class="combo"><span>Selected</span><i class="down small"></i></div>
    <div class="krow"><svg viewBox="0 0 18 18"><path class="ts w2" d="M2 17Q8 12 4 3M16 17Q10 12 14 3M1 4h4M13 4h4"/><path class="ls" d="M7 1.500h4v4H7zM5 3.500h2M11 3.500h2"/></svg><button>Key Filters...</button></div>
  </div>
  <div class="nav">
    <div><svg viewBox="0 0 16 16"><circle class="ls w15" cx="10" cy="6" r="4.500"/><path class="ls w25" d="M7 9l-6 6"/></svg></div>
    <div><svg viewBox="0 0 16 16"><path class="t" d="M5 0h5v4H5zM11 0h5v4h-5zM11 5h5v5h-5z"/><circle class="ls w15 halo" cx="7" cy="8" r="3"/><path class="ls w2" d="M5 10l-4 5"/></svg></div>
    <div class="fly3"><svg viewBox="0 0 16 16"><path class="t" d="M8 3l5 3v5l-5 3-5-3V6z"/><path class="ls" d="M1 4V1h3M12 1h3v3M15 12v3M4 15H1v-3"/><path class="ks" d="M3 6l5 3 5-3" opacity=".5"/></svg></div>
    <div class="fly3"><svg viewBox="0 0 16 16"><path class="t" d="M8 2l4-2 4 2v9l-4 2-4-2z"/><path class="l" d="M0 11l3-2 3 2-3 3zM5 13l3-2 2 2-2 3z"/><path class="ks" d="M12 3v9" opacity=".5"/></svg></div>
    <div><svg viewBox="0 0 16 16"><path class="ls w15" stroke-dasharray="2 2" d="M1 2h14v12"/><path class="ts w15" stroke-dasharray="2 2" d="M1 3v12h12"/><circle class="ts w15" cx="8" cy="7" r="3.500"/><path class="ts w2" d="M6 10l-3 3"/></svg></div>
    <div class="fly3"><svg viewBox="0 0 16 16"><path class="l" d="M4 9V3h2v4h.500V1h2v6H9V2h2v6h.500V4h2v7q-1 5-4 5H8q-3-1-7-6l1-1z"/></svg></div>
    <div class="fly3"><svg viewBox="0 0 16 16"><circle class="l" cx="7" cy="8" r="5.500"/><path class="t" d="M7 2.500V8H1.500A5.500 5.500 0 0 1 7 2.500z"/><path class="ls w2 halo" d="M2 14q14-4 13-12"/></svg></div>
    <div><svg viewBox="0 0 16 16"><path class="l" d="M0 0h16v16H0z"/><path fill="#333" d="M8 2h6v6l-2-2-4 4-2-2 4-4zM2 9h5v5H2z"/></svg></div>
  </div>
</footer>
<script src="scene.js"></script>
</body>
</html>
```
FILE: styles.css
```css
* { box-sizing: border-box; }
body { margin: 0; width: 1915px; height: 1013px; overflow: hidden; background: #444; color: #e6e6e6; font: 11.600px "DejaVu Sans Condensed", "DejaVu Sans", "Noto Sans", sans-serif; display: flex; flex-direction: column; white-space: nowrap; }
button { font: inherit; color: inherit; border: 0; padding: 0; margin: 0; }
p, h3, hr { margin: 0; }
svg { display: block; flex: none; }

/* icon paint */
.l { fill: #d2d2d2; } .t { fill: #4bbdb9; } .g { fill: #f5b32c; } .k { fill: #3c3c3c; }
.ls, .ts, .gs, .ks { fill: none; stroke-width: 1; }
.ls { stroke: #d2d2d2; } .ts { stroke: #4bbdb9; } .gs { stroke: #f0ae2a; } .ks { stroke: #3c3c3c; }
.w15 { stroke-width: 1.500; } .w2 { stroke-width: 2; } .w25 { stroke-width: 2.500; } .w3 { stroke-width: 3; }
.dash { stroke-dasharray: 4 2; }
.o { stroke: #333; stroke-width: 1; }
.halo { paint-order: stroke; filter: drop-shadow(0 0 .6px #222); }

/* arrows */
.down { display: block; flex: none; width: 0; height: 0; border: 5px solid transparent; border-top: 6px solid #e4e4e4; border-bottom: 0; }
.down.small { border-width: 6px 3.500px 0; } .down.tiny { border-width: 4px 3px 0; }
.down.dark { border-top-color: #222; } .down.black { border-top-color: #000; } .down.grey { border-top-color: #b0b0b0; }
.up { width: 0; height: 0; border: 4px solid transparent; border-top: 0; border-bottom: 7px solid #fff; }
.right { width: 0; height: 0; border: 5px solid transparent; border-right: 0; border-left: 6px solid #fff; }

/* menu bar */
.menubar { height: 24px; display: flex; background: linear-gradient(#505050, #444); border-top: 1px solid #d5e2d8; border-bottom: 1px solid #000; box-shadow: inset 0 1px #33483a; }
.menus { display: grid; width: 1575px; padding-left: 11px; align-items: center; grid-template-columns: 43px 48px 54px 60px 58px 61px 73.500px 80px 98.500px 81px 76px 81px 74px 85px 71px 60px 50px; color: #f2f2f2; }
u { text-underline-offset: 2px; }
.user { width: 120px; background: #d0d0d0; color: #222; display: flex; align-items: center; padding-left: 5px; gap: 7px; }
.user span { width: 77px; } .user .down { margin-left: -4px; }
.user .down { border-top-color: #000; }
.wslabel { width: 86px; padding-left: 20px; align-self: center; font-size: 11px; letter-spacing: -.3px; }
.workspace { flex: 1; background: #5d5d5d; display: flex; align-items: center; justify-content: space-between; padding: 0 7px 0 4px; font-size: 11px; margin-top: 1px; }

/* toolbars */
.toolbar { display: flex; height: 33px; align-items: center; padding-left: 7px; background-image: radial-gradient(#aaa 0.600px, transparent 1px); background-size: 3px 3px; background-repeat: repeat-y; background-position: 1px 4px; }
.tool { width: 32px; height: 32px; flex: none; display: flex; align-items: center; justify-content: center; position: relative; }
.tool svg { width: 23px; height: 24px; overflow: visible; }
.scene-tools .tool svg { height: 22px; width: 22px; }
.scene-tools .tool { margin-top: -1px; }
.tool.on { width: 30px; height: 29px; margin: 0 1px; background: #5c88c2; border-radius: 3px; }
.fly::after, .fly3::after { content: ""; position: absolute; right: 1px; bottom: 1px; border-left: 5px solid transparent; border-bottom: 5px solid #eee; }
.sep { width: 2px; height: 16px; margin: 0 2px; background: #161616; flex: none; }
.combo { height: 20px; background: #606060; border: 1px solid #555; display: flex; align-items: center; justify-content: space-between; padding: 0 6px 1px 5px; flex: none; }
.toolbar .combo { margin: 0 1px; align-self: flex-start; margin-top: 4px; font-size: 11px; letter-spacing: -.2px; }
.c-all, .c-view { width: 68px; } .c-sets { width: 118px; padding-left: 4px; }

/* ribbon */
.ribbon-tabs { height: 21px; margin-left: 7px; background: #505050; border-top: 1px solid #6c6c6c; border-bottom: 1px solid #2c2c2c; display: flex; align-items: center; color: #adadad; }
.ribbon-tabs span { margin-left: 25px; width: 58px; }
.ribbon-tabs span:first-child { margin-left: 26px; letter-spacing: .1px; }
.ribbon-tabs span:nth-child(2) { width: 67px; margin-left: 24px; } .ribbon-tabs span:nth-child(3) { width: 67px; } .ribbon-tabs span:nth-child(4) { width: 63px; }
.ribbon-tabs .active { width: 76px; margin-left: 25px; padding-left: 21px; height: 18px; line-height: 18px; align-self: flex-end; background: linear-gradient(#7a7a7a, #5a5a5a); color: #e8e8e8; border-radius: 2px 2px 0 0; }
.pill { width: 14px; height: 8px; margin: 0 4px 0 23px; background: #eee; border-radius: 2px; display: flex; align-items: center; justify-content: center; }
.ribbon-panel { height: 19px; display: flex; padding-left: 8px; gap: 1px; background: linear-gradient(#444, #343434); border-bottom: 1px solid #2c2c2c; }
.ribbon-panel span { height: 18px; padding-left: 5px; line-height: 17px; border: 1px solid #5a5a5a; border-top-color: #444; width: 78px; color: #ececec; letter-spacing: -.1px; }
.ribbon-panel span:nth-child(1) { padding-left: 4px; letter-spacing: 0; width: 77px; } .ribbon-panel span:nth-child(2) { width: 98px; } .ribbon-panel span:nth-child(3) { width: 56px; padding-left: 4px; } .ribbon-panel span:nth-child(4) { width: 48px; padding-left: 4px; letter-spacing: -.2px; } .ribbon-panel span:nth-child(5) { padding-left: 4px; letter-spacing: -.15px; width: 77px; }

/* middle */
.workspace-area { height: 782px; display: grid; grid-template-columns: 38px 295px 1157px 425px; }
.dots { height: 6px; margin-top: 6px; background-image: radial-gradient(#aaa .7px, transparent 1px); background-size: 3px 3px; flex: none; }
.dockcol .dots { width: 35px; margin-bottom: 2px; }
.dock { height: 766px; background: linear-gradient(90deg, #303030, #2a2a2a); border-right: 1px solid #222; display: flex; flex-direction: column; justify-content: flex-end; padding-bottom: 2px; }
.dockplay { width: 19px; height: 19px; margin: 0 0 11px 8px; background: #555; border-radius: 3px; display: flex; align-items: center; justify-content: center; }
.layout-tile { height: 44px; margin-left: 2px; background: linear-gradient(#56749e, #3d7edb); border-radius: 3px 0 0 3px; display: grid; grid-template-columns: 15px 15px; grid-template-rows: 13px 13px; gap: 1px; place-content: center; }
.layout-tile i { background: linear-gradient(#6a7a8c, #4f6075); border: 1px solid #2a3a50; border-radius: 2px; }
.explorer { border-right: 4px solid #3d3d3d; display: flex; flex-direction: column; height: 779px; }
.explorer .dots { margin-left: 7px; width: 282px; }
.ex-menu { display: grid; grid-template-columns: 50px 57px 39px 60px; padding-left: 19px; height: 26px; align-items: center; flex: none; padding-top: 1px; }
.ex-search { height: 25px; display: flex; align-items: center; padding-left: 8px; flex: none; }
.ex-search .box { width: 150px; height: 23px; border: 1px solid #6b6b6b; }
.x { width: 12px; margin: 0 8px 0 5px; }
.ex-search .x { margin: 0 8px; width: 11px; }
.blue { background: #5c88c2; width: 24px; height: 24px; display: flex; align-items: center; justify-content: center; flex: none; }
.blue svg { width: 18px; height: 18px; }
.vsep { width: 2px; height: 22px; background: #222; border-right: 1px solid #888; margin: 0 2px; flex: none; }
.i16 { width: 16px; height: 16px; } .lock { margin: 0 8px 0 5px; }
.more { color: #5f5a98; font-size: 15px; line-height: 12px; align-self: flex-start; margin: -1px 0 0 21px; }
.ex-body { flex: 1; display: flex; margin-top: 3px; }
.filters { width: 29px; padding: 3px 0 0 4px; display: flex; flex-direction: column; }
.f, .p { width: 22px; height: 20px; margin-bottom: 3px; display: flex; align-items: center; justify-content: center; }
.f { background: #5c88c2; } .f svg, .p svg { width: 16px; height: 16px; }
.filters hr { width: 18px; height: 1px; border: 0; background: #888; margin: 2px 2px 3px; }
.filters hr.second { margin: 2px 2px 5px; }
.tree { width: 261px; display: flex; flex-direction: column; border-left: 1px solid #3a3a3a; border-right: 1px solid #3a3a3a; }
.th { height: 20px; border: 1px solid #585858; border-top-color: #666; display: flex; align-items: center; justify-content: space-between; padding: 0 2px 0 0; width: 259px; letter-spacing: -.03px; }
.tr { height: 18px; margin-top: 1px; display: flex; align-items: center; padding-left: 6px; }
.tr svg { margin-left: 6px; } .tr svg + svg { margin-left: 2px; }
.tr span { flex: 1; margin-left: 2px; padding-left: 2px; height: 18px; line-height: 18px; background: #505050; border-left: 1px solid #3a3a3a; }
.hscroll { margin-top: auto; height: 17px; background: #f0f0f0; display: flex; align-items: center; justify-content: space-between; }
.hscroll svg { width: 8px; height: 10px; margin: 0 4px; } .hscroll path { fill: none; stroke: #333; stroke-width: 2; }
.hscroll i { width: 139px; height: 15px; background: #cbcbcb; margin-right: auto; }
.ex-foot { height: 27px; display: flex; align-items: center; padding: 2px 0 0 8px; flex: none; }
.ex-foot .box { width: 145px; height: 23px; border: 1px solid #666; color: #f4ee25; padding: 2px 0 0 1px; }
.ex-foot .down { margin: 0 5px 0 4px; } .ex-foot .blue { margin-right: 3px; } .ex-foot .i16 { margin-right: 6px; } .ex-foot .more { margin-left: 51px; }

/* viewports */
.viewports { display: grid; grid-template-columns: 575px 575px; grid-template-rows: 385px 385px; gap: 4px 3px; padding-top: 5px; }
.vp { position: relative; background: #343434; overflow: hidden; }
.vp svg { width: 100%; height: 100%; }
.vp.active::after { content: ""; position: absolute; inset: 0; border: 2px solid #77682f; }
.vp.front::after { content: ""; position: absolute; inset: 0; border: 1px solid #383838; }
.vp.persp { background: linear-gradient(#1b1b1b, #4a4a4a); border: 2px solid #363636; }
.vp.persp svg { width: 575px; height: 385px; margin: -2px; }
.vl { position: absolute; left: 5px; top: 9px; display: flex; gap: 4px; color: #d8d8d8; font-size: 11px; letter-spacing: -.1px; }
.vl span:first-child { letter-spacing: .9px; margin-right: -1px; }
.front .vl { left: 5px; } .persp .vl { left: 3px; top: 7px; }
.vp path, .vp ellipse { vector-effect: non-scaling-stroke; }
.vp [vector-effect="none"] { vector-effect: none; }
.grid path { stroke: #636363; fill: none; shape-rendering: crispEdges; }
.front .grid path { stroke: #525252; }
.axis { stroke: #000; shape-rendering: crispEdges; }
.pk { fill: #996569; stroke: #2c0202; shape-rendering: crispEdges; }
.e, .e2, .e3 { fill: none; stroke: #2c0202; shape-rendering: crispEdges; }
.e2 { stroke-width: 2px; } .e3 { stroke-width: 2.800px; }
.gl { stroke: #66645f; fill: none; shape-rendering: crispEdges; }
.ed { stroke: #3a0b0b; stroke-width: 1px; }
.persp .e, .persp .e2 { shape-rendering: auto; stroke: #3a0b0b; } .persp .e { stroke-width: .8px; } .persp .e2 { stroke-width: 1.300px; }
.cubetext text, .nsew text, .axl text { text-anchor: middle; font-family: "Liberation Sans", sans-serif; }
.cubetext text { font-size: 22px; fill: #55585f; font-weight: bold; }
.nsew text { font-size: 30px; font-weight: bold; fill: #bdbdbd; }
.axl text { font-size: 27px; }

/* command panel */
.panel { display: flex; flex-direction: column; border-left: 1px solid #3a3a3a; height: 779px; border-bottom: 1px solid #383838; }
.panel > .dots { margin-left: 2px; }
.ptabs { display: flex; height: 28px; border-bottom: 1px solid #383838; padding-top: 1px; gap: 1px; flex: none; }
.pt { width: 31px; height: 27px; background: #393939; border-radius: 4px 4px 0 0; display: flex; align-items: center; justify-content: center; }
.pt.act { width: 30px; background: #444; } .pt svg { width: 18px; height: 18px; }
.cats { display: flex; align-items: center; gap: 6px; height: 31px; padding: 0 0 0 5px; flex: none; }
.cats > svg { width: 16px; height: 16px; } .cats .blue { width: 20px; height: 20px; border-radius: 3px; margin-right: -2px; } .cats .blue svg { width: 15px; height: 16px; }
.pscroll { flex: 1; width: 213px; padding: 2px 0 0 4px; border-right: 5px solid #404040; }
.c-prim { width: 208px; height: 20px; padding-bottom: 0; }
.rollout { width: 200px; background: #505050; border: 1px solid #4a4a4a; border-radius: 2px; box-shadow: 0 0 0 1px #3e3e3e; }
.r1 { margin-top: 6px; height: 167px; } .r2 { margin-top: 4px; height: 56px; }
h3 { display: flex; align-items: center; font-size: 11.700px; height: 18px; padding-left: 6px; color: #f0f0f0; }
h3 span { margin-left: 6px; flex: 1; }
.grip { width: 8px; height: 7px; margin-right: 6px; background-image: radial-gradient(#999 .6px, transparent 1px); background-size: 2.670px 2.670px; }
.rollout label { display: flex; align-items: center; gap: 1px; height: 18px; padding: 2px 0 0 51px; margin-bottom: 2px; color: #8c8c8c; font-size: 11.300px; letter-spacing: -.1px; }
.rollout label i { width: 12px; height: 12px; background: #585858; border: 1px solid #4a4a4a; }
.prims { display: grid; grid-template-columns: 67px 67px; column-gap: 11px; row-gap: 4px; padding: 2px 0 0 27px; }
.prims button { height: 17px; line-height: 17px; padding-right: 2px; background: #626262; border-radius: 3px; box-shadow: 0 0 0 1px #4a4a4a; }
.namerow { display: flex; gap: 4px; padding: 7px 0 0 24px; }
.field { width: 131px; height: 20px; background: #555; border: 1px solid #4b4b4b; } .swatch { width: 17px; height: 20px; background: #999; border: 1px solid #111; }

/* time controls */
.slider { height: 23px; display: flex; gap: 2px; padding: 3px 0 0 8px; }
.slider button { width: 14px; height: 17px; background: #555; border-radius: 2px; } .slider .thumb { width: 123px; background: #606060; }
.timeline { height: 28px; display: flex; margin-left: 7px; }
.curve { width: 50px; height: 27px; border-top: 1px solid #333; padding: 6px 0 0 13px; }
.track { background: #292929; border-top: 1px solid #000; overflow: visible; }
.track text { fill: #e2e2e2; font-size: 11px; text-anchor: middle; }
.track path { stroke: #777; fill: none; shape-rendering: crispEdges; }

/* status bar */
.status { height: 50px; display: flex; }
.listener { width: 134px; margin: 4px 5px 0 2px; background: #ececec; display: flex; flex-direction: column; gap: 2px; padding: 1px; }
.pink { height: 21px; background: #dcc3c3; border: 1px solid #666; } .white { height: 21px; background: #fff; border: 1px solid #555; color: #777; font: 11.700px/19px "Liberation Mono", monospace; overflow: hidden; padding-left: 4px; }
.prompt { width: 875px; border-left: 1px solid #111; margin-top: 2px; padding-left: 3px; display: flex; flex-direction: column; gap: 11px; padding-top: 8px; line-height: 14px; }
.coords { width: 444px; display: flex; flex-direction: column; }
.row { display: flex; align-items: center; }
.coords .row { height: 33px; padding-top: 1px; } .coords .tag { height: 24px; margin-top: -3px; padding: 2px 0 0 310px; }
.cic { width: 16px; height: 16px; margin: 0 5.500px; }
.coords label { width: 14px; margin: 2px 0 0 1px; } .num { width: 58px; height: 18px; background: #5a5a5a; border: 1px solid #4c4c4c; margin-right: 12px; }
.coords .cic + label { margin-left: 1px; }
.gridtxt { margin: 2px 0 0 -1px; }
.coords .num:last-of-type { margin-right: 14px; }
.bsep { width: 2px; height: 16px; background: #1c1c1c; flex: none; }
.tag .blue { width: 21px; height: 21px; border-radius: 3px 3px 0 0; margin-right: 4px; } .tag .blue svg { width: 14px; height: 14px; }
.transport { width: 134px; padding: 5px 0 0 1px; }
.transport .row { height: 22px; } .transport .row svg { width: 16px; height: 12px; margin: 0 4px; } .transport .row .clock { height: 16px; }
.transport .first svg { margin: 0 3px; }
.transport .bsep { margin: 0 1px; } .transport .row > svg:first-child { margin: 0 4px 0 5px; }
.play { position: relative; padding: 0 1px; } .transport .play svg { height: 16px; margin: 0 2px; } .transport .play::after { bottom: -2px; right: -1px; }
.spin { width: 67px; height: 17px; background: #5e5e5e; display: flex; align-items: center; justify-content: space-between; padding-left: 3px; }
.transport .spin svg { width: 6px; height: 10px; margin: 0 3px; }
.bigkey { width: 42px; height: 42px; margin: 6px 5px 0 0; background: #606060; border-radius: 3px; display: flex; align-items: center; justify-content: center; } .bigkey svg { width: 30px; height: 30px; }
.keys { width: 46px; margin: 6px 5px 0 0; display: flex; flex-direction: column; gap: 2px; letter-spacing: -.3px; } .keys button { height: 20px; line-height: 21px; background: #606060; border-radius: 3px; }
.keysets { width: 114px; margin-top: 6px; } .krow { display: flex; align-items: center; margin-top: 3px; } .krow svg { width: 18px; height: 18px; margin: 0 7px 0 2px; } .krow button { width: 87px; height: 20px; line-height: 21px; background: #606060; border-radius: 3px; }
.nav { display: grid; grid-template-columns: repeat(4, 23.300px); grid-template-rows: 22px 22px; padding: 5px 0 0 8px; } .nav div { display: flex; align-items: center; justify-content: center; position: relative; } .nav svg { width: 16px; height: 16px; }
.fly3::after { right: -1px; bottom: 1px; border-width: 0 0 4px 4px; border-style: solid; }
```
FILE: scene.js
```js
const NS = 'http://www.w3.org/2000/svg';
function add(parent, tag, attrs, text) {
  const el = document.createElementNS(NS, tag);
  for (const k in attrs) el.setAttribute(k, attrs[k]);
  if (text !== undefined) el.textContent = text;
  parent.appendChild(el);
}

// construction grids
document.querySelectorAll('.grid').forEach(g => {
  const { x0, dx, y0, dy } = g.dataset;
  let d = '';
  for (let x = +x0; x < 1555; x += +dx) d += `M${x.toFixed(1)} 20V1165`;
  for (let y = +y0; y < 1165; y += +dy) d += `M8 ${y.toFixed(1)}H1552`;
  add(g, 'path', { d });
});

// frame ticks 0..100
const ticks = document.getElementById('ticks');
let d = '';
for (let f = 0; f <= 100; f++) {
  const x = (7.3 + f * 17.975).toFixed(1);
  d += `M${x} 0v${f % 5 ? 11 : 27}`;
}
add(ticks, 'path', { d });
for (let f = 0; f <= 100; f += 5) add(ticks, 'text', { x: (6.8 + f * 17.975).toFixed(1), y: 23 }, f);
```
